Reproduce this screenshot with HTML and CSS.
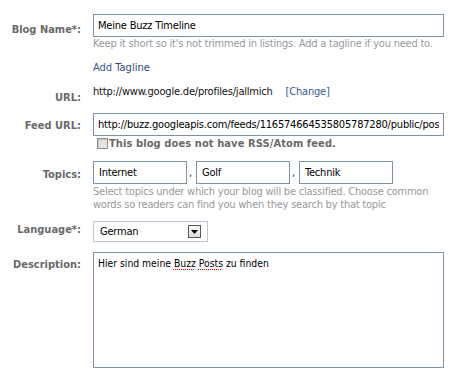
FILE: index.html
```html
<!DOCTYPE HTML>
<html>
<head>
<title>Blog Info</title>
<link rel="stylesheet" href="styles.css">
</head>
<body>
<div class="editForm">
  <div class="row rowName">
    <div class="label labelName">Blog Name*:</div>
    <div class="field">
      <input type="text" class="textInput" value="Meine Buzz Timeline" />
      <div class="hint">Keep it short so it's not trimmed in listings. Add a tagline if you need to.</div>
      <div class="tagline"><a href="#">Add</a> <a href="#" class="dark">Tagline</a></div>
    </div>
  </div>

  <div class="row rowUrl">
    <div class="label labelUrl">URL:</div>
    <div class="field urlValue">
      <span>http://www.google.de/profiles/jallmich</span>
      <a href="#" class="change">[Change]</a>
    </div>
  </div>

  <div class="row rowFeed">
    <div class="label labelFeed">Feed URL:</div>
    <div class="field">
      <input type="text" class="textInput" value="http://buzz.googleapis.com/feeds/116574664535805787280/public/posted" />
      <label class="noFeed"><span class="checkBox"></span>This blog does not have RSS/Atom feed.</label>
    </div>
  </div>

  <div class="row rowTopics">
    <div class="label labelTopics">Topics:</div>
    <div class="field">
      <div class="topics">
        <input type="text" class="topicInput" value="Internet" /><span class="comma">,</span>
        <input type="text" class="topicInput" value="Golf" /><span class="comma">,</span>
        <input type="text" class="topicInput" value="Technik" />
      </div>
      <div class="hint topicHint">Select topics under which your blog will be classified. Choose common words so readers can find you when they search by that topic</div>
    </div>
  </div>

  <div class="row rowLang">
    <div class="label labelLang">Language*:</div>
    <div class="field">
      <div class="select">
        <span>German</span>
        <span class="arrowButton">
          <svg width="7" height="4" viewBox="0 0 7 4"><polygon points="0,0 7,0 3.5,4" fill="#000"/></svg>
        </span>
      </div>
    </div>
  </div>

  <div class="row rowDesc">
    <div class="label labelDesc">Description:</div>
    <div class="field">
      <div class="textArea">Hier sind meine <span class="spell">Buzz</span> <span class="spell">Posts</span> zu finden</div>
    </div>
  </div>
</div>
</body>
</html>
```

FILE: styles.css
```css
body {
  margin: 0;
  background: #fff;
  font-family: "DejaVu Sans Condensed", "DejaVu Sans", sans-serif;
  font-stretch: condensed;
  font-size: 11px;
  line-height: 13px;
}

.editForm {
  padding-top: 14px;
}

.row {
  display: flex;
}

.rowUrl { margin-top: 11px; }
.rowFeed { margin-top: 9px; }
.rowTopics { margin-top: 11px; }
.rowLang { margin-top: 10px; }
.rowDesc { margin-top: 10px; }

.label {
  flex: none;
  width: 81px;
  margin-right: 12px;
  text-align: right;
  color: #6a6a6a;
  font-weight: bold;
  white-space: nowrap;
}

.labelName { padding-top: 9px; }
.labelUrl { padding-top: 6px; }
.labelFeed { padding-top: 6px; }
.labelTopics { padding-top: 7px; }
.labelLang { padding-top: 2px; }
.labelDesc { padding-top: 6px; }

.field {
  width: 351px;
}

.textInput {
  display: block;
  box-sizing: border-box;
  width: 351px;
  height: 23px;
  margin: 0;
  padding: 0 4px;
  border: 1px solid #7f8fae;
  font-family: "DejaVu Sans Condensed", "DejaVu Sans", sans-serif;
  font-stretch: condensed;
  font-size: 11px;
  letter-spacing: -0.2px;
  color: #000;
}

.hint {
  color: #999;
  letter-spacing: -0.22px;
}

.tagline {
  margin-top: 11px;
}

.tagline a, .change {
  color: #3b5998;
  text-decoration: none;
}

.tagline a.dark {
  color: #2f477a;
}

.urlValue {
  color: #111;
  letter-spacing: -0.2px;
}

.change {
  margin-left: 10px;
}

.noFeed {
  display: flex;
  align-items: center;
  margin: 1px 0 0 4px;
  color: #6a6a6a;
  font-weight: bold;
  letter-spacing: 0.1px;
}

.checkBox {
  width: 11px;
  height: 11px;
  box-sizing: border-box;
  border: 1px solid #8c8c8c;
  background: #e4e4e4;
  box-shadow: inset 1px 1px 0 #c6c6c6;
  margin-right: 1px;
}

.topics {
  display: flex;
  align-items: center;
}

.topicInput {
  box-sizing: border-box;
  width: 94px;
  height: 23px;
  margin: 0;
  padding: 0 5px;
  border: 1px solid #7f8fae;
  font-family: "DejaVu Sans Condensed", "DejaVu Sans", sans-serif;
  font-stretch: condensed;
  font-size: 11px;
  letter-spacing: -0.2px;
}

.comma {
  width: 9px;
  padding-left: 2px;
  box-sizing: border-box;
  color: #333;
}

.topicHint {
  margin-top: 1px;
}

.select {
  display: flex;
  align-items: center;
  justify-content: space-between;
  box-sizing: border-box;
  width: 115px;
  height: 21px;
  padding: 0 6px 0 6px;
  border: 1px solid #bcc5d6;
  letter-spacing: -0.2px;
}

.arrowButton {
  display: flex;
  align-items: center;
  justify-content: center;
  width: 13px;
  height: 13px;
  box-sizing: border-box;
  border: 1px solid #555;
  background: linear-gradient(to bottom, #fcfcfc, #dcdcdc);
}

.textArea {
  box-sizing: border-box;
  width: 351px;
  height: 116px;
  padding: 4px 4px;
  border: 1px solid #7f8fae;
  font-size: 10.3px;
}

.spell {
  text-decoration: underline dotted #e00;
  text-underline-offset: 2px;
}
```
